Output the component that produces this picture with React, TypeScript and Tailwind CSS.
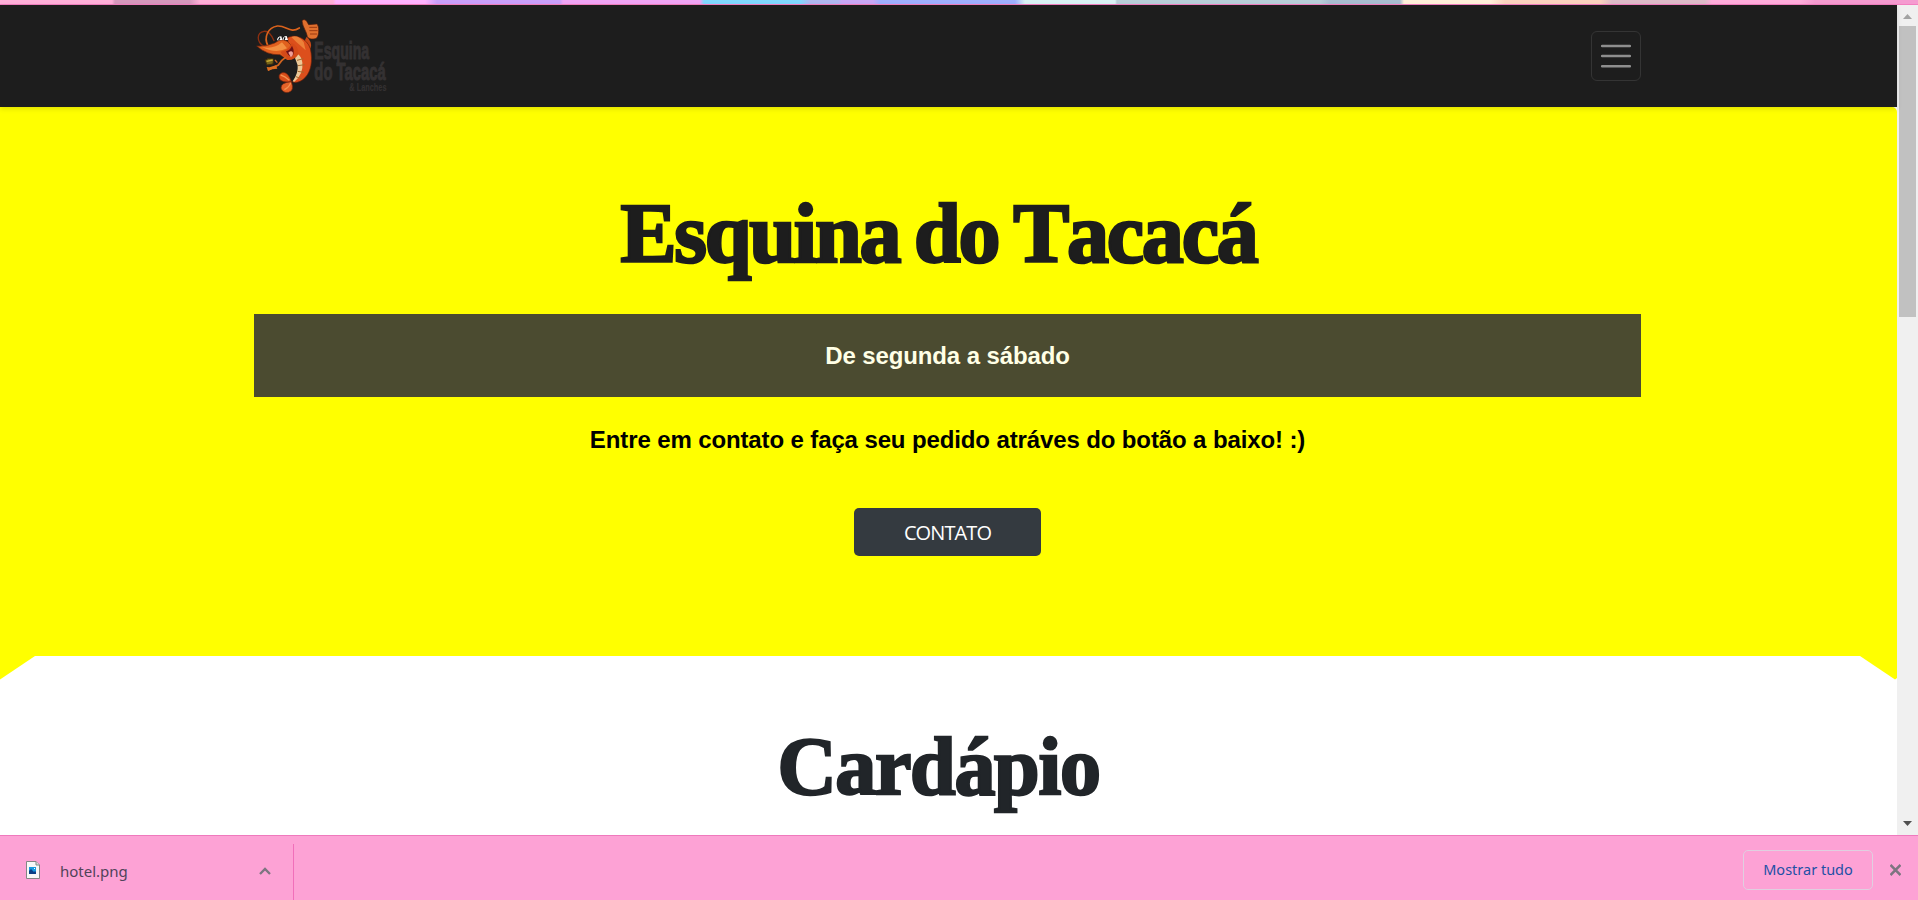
function Logo() {
  return (
    <svg className="h-[80px] w-[134px]" viewBox="48 48 402 240" aria-label="Esquina do Tacacá & Lanches">
      <g fill="none" strokeLinecap="round" strokeLinejoin="round">
        <path d="M72 140C48 124 50 98 72 94c16-2 24 14 30 28" stroke="#8c2f10" strokeWidth="4" />
        <path d="M84 138C70 112 84 82 112 78c28-2 38 24 66 6" stroke="#d9621c" strokeWidth="5" />
      </g>
      <path d="M186 62c4-5 12-3 14 2l6 10 24-2c8 2 8 36 0 42-8 5-24 4-28-4-1-14-15-30-16-48Z" fill="#e0702e" stroke="#4e1a0b" strokeWidth="2" />
      <path d="M208 82h23M208 92h25M210 102h21" stroke="#9c3910" strokeWidth="3" />
      <path d="M200 110q18 16 12 34l-15 10-7-24Z" fill="#c94816" />
      <path d="M143 113c22-12 57 0 68 33 8 36 2 68-15 86-12 13-26 18-38 14 16-18 25-36 20-58-2-18-16-31-32-42Z" fill="#dc4f1c" stroke="#701f09" strokeWidth="2" />
      <path d="M154 111q20-8 37 15l6 25-28-25Z" fill="#ec8038" />
      <path d="M170 160q14 8 17 27 4 36-24 58l-5-1q17-23 15-48l-8-22Z" fill="#ecc998" />
      <path d="M171 181l19-5M174 197l20-3M173 214l19 3M168 230l18 7" stroke="#a4672c" strokeWidth="3" />
      <path d="M50 138q29 3 54-9 28-21 48 5l8 34q-25 11-40-4-39 2-70-26Z" fill="#e0601e" stroke="#71230d" strokeWidth="2" />
      <path d="M66 141q35 8 60-14l15 18q-33 18-75-4Z" fill="#f39042" />
      <path d="M122 155q25-5 33-27 20 8 21 34-13 20-34 18-13-7-20-25Z" fill="#d54a18" />
      <path d="M138 154q14-5 18-17 9 17 2 30-10 8-20-13Z" fill="#6e1015" />
      <path d="M145 158q9-8 14 0 0 11-7 13Z" fill="#f0a098" />
      <path d="M111 121q1-12 13-12l3 11ZM128 120q-1-11 12-12l4 12Z" fill="#fff" />
      <path d="M116 120l4-7M132 120l3-8" stroke="#111" strokeWidth="4" />
      <path d="M138 171q-15 10-23 24l-31 15" fill="none" stroke="#cf6420" strokeWidth="5" />
      <path d="M112 188l-7-8" stroke="#cf6420" strokeWidth="4" />
      <path d="M75 181q10-10 26-4l-2 15-18 3Z" fill="#75651a" stroke="#3f2b0b" strokeWidth="3" />
      <path d="M80 184l18-4" stroke="#cfae34" strokeWidth="4" />
      <path d="M80 201l8 1 20-6 4 10-15 2-13 5Z" fill="#dc6d20" />
      <path d="M154 245q-10-31-28-27-15 7-5 22 12 9 33 5Z" fill="#d94d19" stroke="#77220d" strokeWidth="2" />
      <path d="M154 245q-31 2-31 19 5 16 23 13 18-5 8-32Z" fill="#e46228" stroke="#77220d" strokeWidth="2" />
      <path d="M122 225q12 3 26 16M133 269q14-7 19-20" fill="none" stroke="#f39151" strokeWidth="4" />
      <g fill="#343132" stroke="#343132" fontWeight="700" fontFamily="'Liberation Sans', sans-serif">
        <text transform="translate(223 176) scale(0.605 1)" fontSize="70" strokeWidth="3">Esquina</text>
        <text transform="translate(223 241) scale(0.635 1)" fontSize="70" strokeWidth="3">do Tacacá</text>
        <text transform="translate(328 272) scale(0.65 1)" fontSize="34" strokeWidth="0.5">&amp; Lanches</text>
      </g>
    </svg>
  );
}

function Navbar() {
  return (
    <header className="relative z-10 flex h-[102px] shrink-0 items-center justify-between bg-[#1d1d1d] pr-64 pl-64 shadow-[0_2px_5px_rgba(0,0,0,0.12)]">
      <Logo />
      <button aria-label="Menu" className="flex h-[50px] w-[50px] items-center justify-center rounded-[6px] border border-[#343434]">
        <svg className="h-[30px] w-[30px]" viewBox="0 0 30 30" stroke="#8e8e8e" strokeWidth="2.4" strokeLinecap="round">
          <path d="M1 5h28M1 15h28M1 25.2h28" />
        </svg>
      </button>
    </header>
  );
}

function Hero() {
  return (
    <section className="flex h-[549px] shrink-0 flex-col items-center rounded-tr-[5px] bg-[#ffff00] pt-[76px] pr-[256px] pl-[254px]">
      <h1 className="h-[131px] -translate-x-[9px] font-['Liberation_Serif'] text-[84px] leading-[102px] font-bold tracking-[-2.2px] whitespace-nowrap text-[#1d1d1d] [-webkit-text-stroke:2.6px_#1d1d1d] [font-kerning:none] [word-spacing:-4px]">
        Esquina do Tacacá
      </h1>
      <div className="flex h-[83px] w-[1387px] shrink-0 items-center justify-center bg-[#4b4b30] font-['Liberation_Sans'] text-2xl font-bold tracking-[-0.12px] text-[#ffffe6]">
        De segunda a sábado
      </div>
      <p className="mt-[27px] font-['Liberation_Sans'] text-2xl font-bold tracking-[-0.12px] text-black">
        Entre em contato e faça seu pedido atráves do botão a baixo! :)
      </p>
      <button className="mt-[52px] flex h-12 w-[187px] shrink-0 items-center justify-center rounded-[5px] bg-[#343a40] pt-0.5 font-['Open_Sans'] text-[20px] tracking-[-0.9px] text-white">
        CONTATO
      </button>
    </section>
  );
}

function MenuSection() {
  return (
    <section className="relative flex flex-1 justify-center bg-white">
      <svg className="absolute top-0 left-0 h-[24px] w-[36px]" viewBox="0 0 36 24" fill="#ffff00"><path d="M0 0h35L0 23.5Z" /></svg>
      <svg className="absolute top-0 right-0 h-[24px] w-[37px]" viewBox="0 0 37 24" fill="#ffff00"><path d="M0 0h37v22l-2 1.5Z" /></svg>
      <h2 className="mt-[60px] h-[102px] -translate-x-[10px] font-['Liberation_Serif'] text-[82px] leading-[102px] font-bold tracking-[-1.3px] text-[#212529] [-webkit-text-stroke:2.4px_#212529]">
        Cardápio
      </h2>
    </section>
  );
}

function Scrollbar() {
  return (
    <div className="flex w-[21px] shrink-0 flex-col items-center bg-[#f0f0f0]">
      <svg className="h-[21px] w-[21px] shrink-0" viewBox="0 0 21 21" fill="#a3a3a3"><path d="M6 14h9l-4.500-5Z" /></svg>
      <div className="h-[291px] w-[17px] bg-[#c1c1c1]" />
      <svg className="mt-auto h-[21px] w-[21px] shrink-0" viewBox="0 0 21 21" fill="#505050"><path d="M6 7h9l-4.500 5Z" /></svg>
    </div>
  );
}

function DownloadBar() {
  return (
    <footer className="flex h-[65px] shrink-0 items-center border-t border-[#ef79bd] bg-[#fda2d5] font-['Noto_Sans']">
      <div className="mt-2 flex h-14 w-[294px] items-center border-r border-[#f16fba] pr-[22px] pl-[26px]">
        <svg className="-mt-1 h-[18px] w-[14px]" viewBox="0 0 14 18">
          <path d="M.5.5H10l3.500 3.500v13.500H.5Z" fill="#f8f8f8" stroke="#858585" />
          <path d="M10 .5V4h3.500" fill="#ddd" stroke="#858585" />
          <path d="M3 6h7v7H3Z" fill="#1999df" />
          <path d="M3 10l2-2 3 3 1-1 1 1v2H3Z" fill="#0b3e86" />
          <path d="M8 7h1v1H8Z" fill="#fff" />
        </svg>
        <span className="-mt-0.5 ml-[20px] text-[15px] text-[#504359]">hotel.png</span>
        <svg className="-mt-0.5 ml-auto h-[10px] w-[12px]" viewBox="0 0 12 10" fill="none" stroke="#7c7580" strokeWidth="2.3"><path d="M1 8l5-5 5 5" /></svg>
      </div>
      <button className="mt-1 ml-auto flex h-10 w-[130px] items-center justify-center rounded-[5px] border border-[#e0cfe0] text-[14.5px] text-[#2350a5]">
        <span className="-mt-px">Mostrar tudo</span>
      </button>
      <svg className="mt-1 mr-[17px] ml-[17px] h-[12px] w-[11px]" viewBox="0 0 11 12" fill="none" stroke="#7c7580" strokeWidth="2.5"><path d="M.5 1l10 10M10.500 1l-10 10" /></svg>
    </footer>
  );
}

export default function App() {
  return (
    <div className="flex h-[900px] w-[1918px] flex-col overflow-hidden">
      <div className="h-[5px] shrink-0 border-b border-[#f37fc0] bg-[linear-gradient(90deg,#ffb0d9_0_112px,#d699bd_115px_190px,#ffb0d8_200px_333px,#ffb3ff_336px_425px,#c99ffa_437px_560px,#f0a5f5_563px_700px,#80d8ff_704px_800px,#b0b8f0_810px_838px,#c9a7f5_842px_873px,#9fb0ff_880px_1015px,#d9f2f5_1025px_1115px,#b8ced8_1117px_1320px,#a8bdd0_1330px_1400px,#fff0da_1404px_1490px,#fbd3bf_1505px_1600px,#ddbbc8_1612px_1705px,#ffaddb_1712px_1800px,#f59bd0_1815px_1918px)]" />
      <div className="flex h-[830px] shrink-0">
        <main className="flex min-w-0 flex-1 flex-col bg-white">
          <Navbar />
          <Hero />
          <MenuSection />
        </main>
        <Scrollbar />
      </div>
      <DownloadBar />
    </div>
  );
}
